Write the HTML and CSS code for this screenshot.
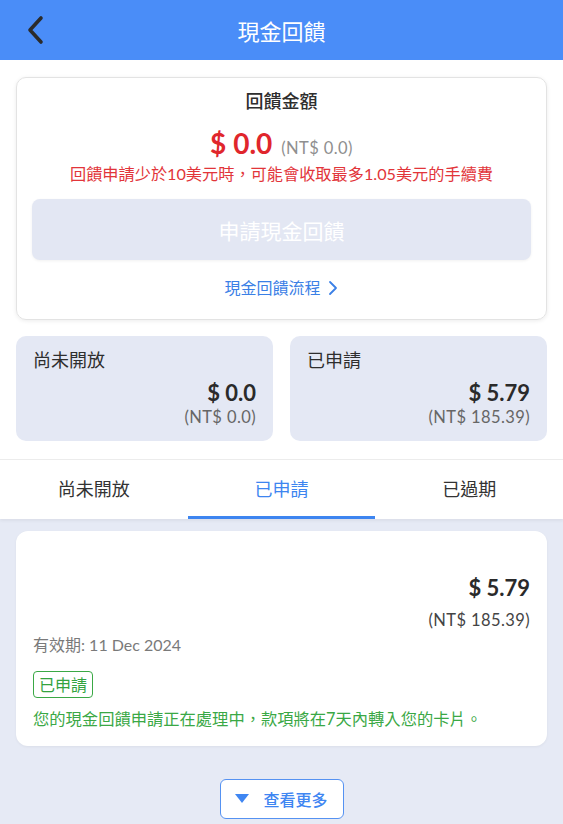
FILE: index.html
```html
<!DOCTYPE html>
<html lang="zh-Hant">
<head>
  <meta charset="UTF-8" />
  <meta name="viewport" content="width=device-width, initial-scale=1.0"/>
  <title>現金回饋</title>
  <link rel="stylesheet" href="styles.css">
</head>
<body>
  <div id="topBar">
    <svg class="back-icon" width="20" height="30" viewBox="0 0 20 30">
      <path d="M15 3 L4 15 L15 27" fill="none" stroke="#2b2b2b" stroke-width="3.6" stroke-linecap="round" stroke-linejoin="round"/>
    </svg>
    <h1>現金回饋</h1>
  </div>

  <div id="summary">
    <div class="main-card">
      <div class="card-title">回饋金額</div>
      <div class="big-amount"><span class="usd">$ 0.0</span><span class="ntd">(NT$ 0.0)</span></div>
      <div class="fee-note">回饋申請少於10美元時，可能會收取最多1.05美元的手續費</div>
      <button class="apply-btn" disabled>申請現金回饋</button>
      <div class="flow-link">現金回饋流程
        <svg width="12" height="18" viewBox="0 0 12 18"><path d="M3 3 L9 9 L3 15" fill="none" stroke="#3b80e6" stroke-width="1.8" stroke-linecap="round" stroke-linejoin="round"/></svg>
      </div>
    </div>

    <div class="stats">
      <div class="stat-box">
        <div class="stat-label">尚未開放</div>
        <div class="stat-amount">$ 0.0</div>
        <div class="stat-ntd">(NT$ 0.0)</div>
      </div>
      <div class="stat-box">
        <div class="stat-label">已申請</div>
        <div class="stat-amount">$ 5.79</div>
        <div class="stat-ntd">(NT$ 185.39)</div>
      </div>
    </div>
  </div>

  <div id="tabs">
    <div class="tab">尚未開放</div>
    <div class="tab active">已申請</div>
    <div class="tab">已過期</div>
  </div>

  <div id="list">
    <div class="record">
      <div class="rec-amount">$ 5.79</div>
      <div class="rec-ntd">(NT$ 185.39)</div>
      <div class="rec-date">有效期: 11 Dec 2024</div>
      <div class="badge">已申請</div>
      <div class="rec-msg">您的現金回饋申請正在處理中，款項將在7天內轉入您的卡片。</div>
    </div>

    <button class="more-btn">
      <svg width="14" height="10" viewBox="0 0 14 10"><path d="M0 0 H14 L7 9 Z" fill="#3f86f2"/></svg>
      查看更多
    </button>
  </div>
</body>
</html>
```

FILE: styles.css
```css
body {
  font-family: "Lato", "Noto Sans CJK TC", sans-serif;
  margin: 0;
  padding: 0;
  background: #e6eaf5;
  color: #333;
  width: 563px;
  height: 824px;
  overflow: hidden;
}
#topBar {
  height: 60px;
  background: #4a8df8;
  display: flex;
  align-items: center;
  justify-content: center;
  position: relative;
}
.back-icon {
  position: absolute;
  left: 26px;
  top: 15px;
}
#topBar h1 {
  margin: 0;
  color: #fff;
  font-size: 22px;
  font-weight: 400;
}
#summary {
  background: #fff;
  padding: 17px 16px 18px;
}
.main-card {
  border: 1px solid #e3e3e3;
  border-radius: 10px;
  box-shadow: 0 1px 4px rgba(0, 0, 0, 0.08);
  padding: 12px 15px 20px;
  text-align: center;
}
.card-title {
  font-size: 18px;
  line-height: 22px;
  font-weight: 500;
  color: #2e2e2e;
}
.big-amount {
  margin-top: 14px;
  height: 30px;
  display: flex;
  align-items: baseline;
  justify-content: center;
  gap: 9px;
}
.usd {
  color: #e0262c;
  font-size: 28px;
  font-weight: 700;
}
.ntd {
  color: #8f8f8f;
  font-size: 16.5px;
  letter-spacing: 0.4px;
}
.fee-note {
  margin-top: 8px;
  font-size: 16.2px;
  line-height: 20px;
  color: #e2353a;
}
.apply-btn {
  display: block;
  width: 100%;
  height: 61px;
  margin-top: 15px;
  border: none;
  border-radius: 8px;
  background: #e3e7f3;
  color: #fff;
  font-family: inherit;
  font-size: 21px;
  box-shadow: 0 1px 3px rgba(0, 0, 0, 0.06);
}
.flow-link {
  margin-top: 17px;
  font-size: 16px;
  line-height: 22px;
  color: #3b80e6;
  display: flex;
  align-items: center;
  justify-content: center;
  gap: 6px;
}
.stats {
  display: flex;
  gap: 17px;
  margin-top: 16px;
}
.stat-box {
  flex: 1;
  height: 105px;
  box-sizing: border-box;
  background: #e4e8f4;
  border-radius: 10px;
  padding: 13px 17px 15px;
}
.stat-label {
  font-size: 18px;
  line-height: 22px;
  color: #2e2e2e;
}
.stat-amount {
  margin-top: 8px;
  text-align: right;
  font-size: 22px;
  font-weight: 700;
  line-height: 28px;
  color: #2a2a2a;
}
.stat-ntd {
  text-align: right;
  font-size: 16.5px;
  letter-spacing: 0.4px;
  line-height: 20px;
  color: #666;
}
#tabs {
  display: flex;
  background: #fff;
  border-top: 1px solid #ececec;
  height: 60px;
  box-sizing: border-box;
  box-shadow: 0 2px 3px rgba(0, 0, 0, 0.05);
}
.tab {
  flex: 1;
  display: flex;
  align-items: center;
  justify-content: center;
  font-size: 18px;
  color: #333;
  border-bottom: 3px solid transparent;
}
.tab.active {
  color: #3d85f0;
  border-bottom-color: #3d85f0;
}
#list {
  padding: 12px 16px 0;
  display: flex;
  flex-direction: column;
}
.record {
  background: #fff;
  border-radius: 12px;
  box-shadow: 0 1px 3px rgba(0, 0, 0, 0.05);
  padding: 43px 17px 17px;
}
.rec-amount {
  text-align: right;
  font-size: 22px;
  font-weight: 700;
  line-height: 28px;
  color: #2a2a2a;
}
.rec-ntd {
  margin-top: 8px;
  text-align: right;
  font-size: 16.5px;
  letter-spacing: 0.4px;
  line-height: 20px;
  color: #444;
}
.rec-date {
  margin-top: 5px;
  font-size: 16px;
  line-height: 20px;
  color: #7a7a7a;
}
.badge {
  width: fit-content;
  margin-top: 16px;
  padding: 0 5px;
  height: 27px;
  line-height: 25px;
  box-sizing: border-box;
  border: 1.5px solid #3aa845;
  border-radius: 4px;
  color: #33a340;
  font-size: 16px;
}
.rec-msg {
  margin-top: 11px;
  font-size: 16.3px;
  line-height: 20px;
  color: #3aa845;
}
.more-btn {
  align-self: center;
  margin-top: 33px;
  width: 124px;
  height: 40px;
  background: #fff;
  border: 1.5px solid #5592f2;
  border-radius: 6px;
  color: #3f86f2;
  font-family: inherit;
  font-size: 16px;
  font-weight: 500;
  display: flex;
  align-items: center;
  justify-content: center;
  gap: 14px;
}
```
